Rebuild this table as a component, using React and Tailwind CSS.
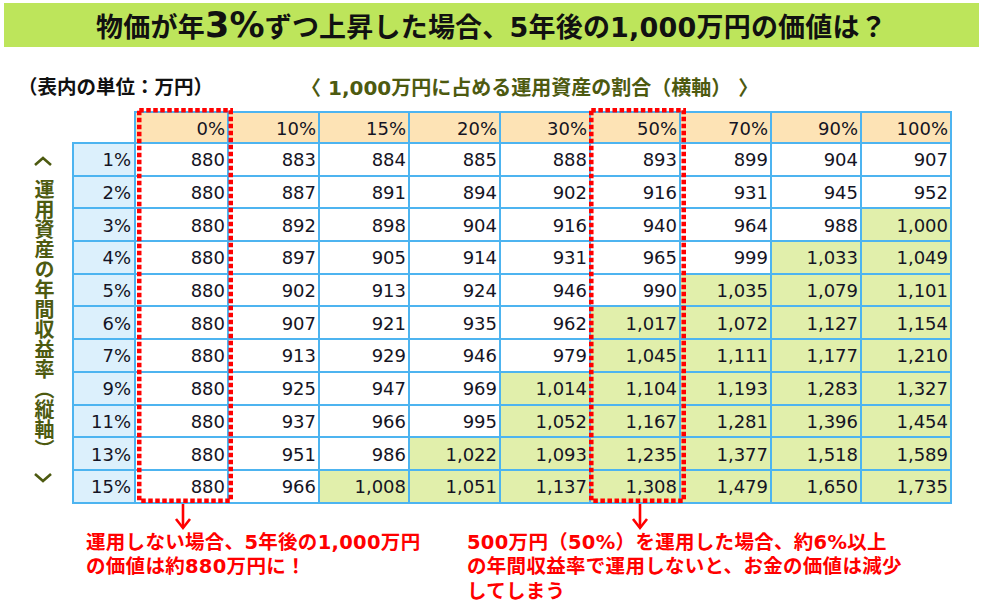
const cols = ["0%", "10%", "15%", "20%", "30%", "50%", "70%", "90%", "100%"];

const rows = [
  ["1%", [880, 883, 884, 885, 888, 893, 899, 904, 907]],
  ["2%", [880, 887, 891, 894, 902, 916, 931, 945, 952]],
  ["3%", [880, 892, 898, 904, 916, 940, 964, 988, 1000]],
  ["4%", [880, 897, 905, 914, 931, 965, 999, 1033, 1049]],
  ["5%", [880, 902, 913, 924, 946, 990, 1035, 1079, 1101]],
  ["6%", [880, 907, 921, 935, 962, 1017, 1072, 1127, 1154]],
  ["7%", [880, 913, 929, 946, 979, 1045, 1111, 1177, 1210]],
  ["9%", [880, 925, 947, 969, 1014, 1104, 1193, 1283, 1327]],
  ["11%", [880, 937, 966, 995, 1052, 1167, 1281, 1396, 1454]],
  ["13%", [880, 951, 986, 1022, 1093, 1235, 1377, 1518, 1589]],
  ["15%", [880, 966, 1008, 1051, 1137, 1308, 1479, 1650, 1735]],
];

const colWidths = ["w-[93px]", "w-[91px]", "w-[90px]", "w-[91px]", "w-[90px]", "w-[90px]", "w-[91px]", "w-[90px]", "w-[90px]"];

const jp = { fontFamily: '"DejaVu Sans", "Noto Sans CJK JP", sans-serif' };

function DottedBox({ className }) {
  return (
    <svg className={`absolute pointer-events-none ${className}`} viewBox="0 0 96 395" preserveAspectRatio="none">
      <rect x="2.25" y="2.25" width="91.5" height="390.5" fill="none" stroke="#ff0000" strokeWidth="4.5" strokeDasharray="4.5 2.5" />
    </svg>
  );
}

function ArrowDown() {
  return (
    <svg width="20" height="27" viewBox="0 0 20 27" className="block">
      <line x1="10" y1="0" x2="10" y2="24" stroke="#ff0000" strokeWidth="2.6" />
      <polyline points="3,15 10,24 17,15" fill="none" stroke="#ff0000" strokeWidth="2.6" />
    </svg>
  );
}

function Wedge({ up }) {
  return (
    <svg width="20" height="12" viewBox="0 0 20 12" className="block">
      <polyline
        points={up ? "2,10 10,3 18,10" : "2,2 10,9 18,2"}
        fill="none"
        stroke="#4d5a10"
        strokeWidth="2.6"
      />
    </svg>
  );
}

export default function App() {
  return (
    <div className="w-[982px] h-[602px] bg-white overflow-hidden text-[#111]" style={jp}>
      <div className="mx-[4px] mt-[3px] w-[975px] h-[44px] bg-[#bde55b] flex items-center justify-center">
        <h1 className="text-[27px] font-bold text-[#111] leading-none tracking-[0.2px]">
          物価が年<span className="text-[35px]">3%</span>ずつ上昇した場合、5年後の1,000万円の価値は？
        </h1>
      </div>

      <div className="flex mt-[29px] h-[24px] items-center font-bold leading-[24px]">
        <div className="pl-[18px] w-[301px] text-[#111] text-[19.5px]">（表内の単位：万円）</div>
        <div className="text-[#4d5a10] text-[20px]">〈 1,000万円に占める運用資産の割合（横軸） 〉</div>
      </div>

      <div className="flex mt-[11px] items-start">
        <div className="w-[72px] flex flex-col items-center pt-[44px] pl-[14px]">
          <Wedge up />
          <div className="mt-[12px] [writing-mode:vertical-rl] text-[20px] font-bold text-[#4d5a10] leading-none">
            運用資産の年間収益率（縦軸）
          </div>
          <div className="mt-[13px]"><Wedge /></div>
        </div>

        <div className="relative">
          <table className="border-collapse table-fixed text-[18px] text-[#141424]">
            <thead>
              <tr className="h-[31px]">
                <th className="w-[62px] border-0 p-0"></th>
                {cols.map((c, i) => (
                  <th key={c} className={`${colWidths[i]} border-2 border-[#4db4f0] bg-[#fde3b5] font-normal text-right pr-[2px] pt-[2px] leading-none`}>
                    {c}
                  </th>
                ))}
              </tr>
            </thead>
            <tbody>
              {rows.map(([rate, vals]) => (
                <tr key={rate} className="h-[32.7px]">
                  <td className="border-2 border-[#4db4f0] bg-[#dcf0fc] text-right pr-[3px] pt-[2px] leading-none">{rate}</td>
                  {vals.map((v, i) => (
                    <td
                      key={i}
                      className={`border-2 border-[#4db4f0] text-right pr-[2px] pt-[2px] leading-none ${v >= 1000 ? "bg-[#e1efab]" : "bg-white"}`}
                    >
                      {v.toLocaleString("en-US")}
                    </td>
                  ))}
                </tr>
              ))}
            </tbody>
          </table>
          <DottedBox className="left-[65px] top-[-3px] w-[96px] h-[395px]" />
          <DottedBox className="left-[517px] top-[-3px] w-[97px] h-[395px]" />
        </div>
      </div>

      <div className="flex text-[#ff0000] font-bold text-[19.5px] leading-[24.5px] tracking-[0.3px]">
        <div className="ml-[86px] w-[381px]">
          <div className="ml-[87px]"><ArrowDown /></div>
          <p>運用しない場合、5年後の1,000万円<br />の価値は約880万円に！</p>
        </div>
        <div>
          <div className="ml-[163px]"><ArrowDown /></div>
          <p>500万円（50%）を運用した場合、約6%以上<br />の年間収益率で運用しないと、お金の価値は減少<br />してしまう</p>
        </div>
      </div>
    </div>
  );
}
